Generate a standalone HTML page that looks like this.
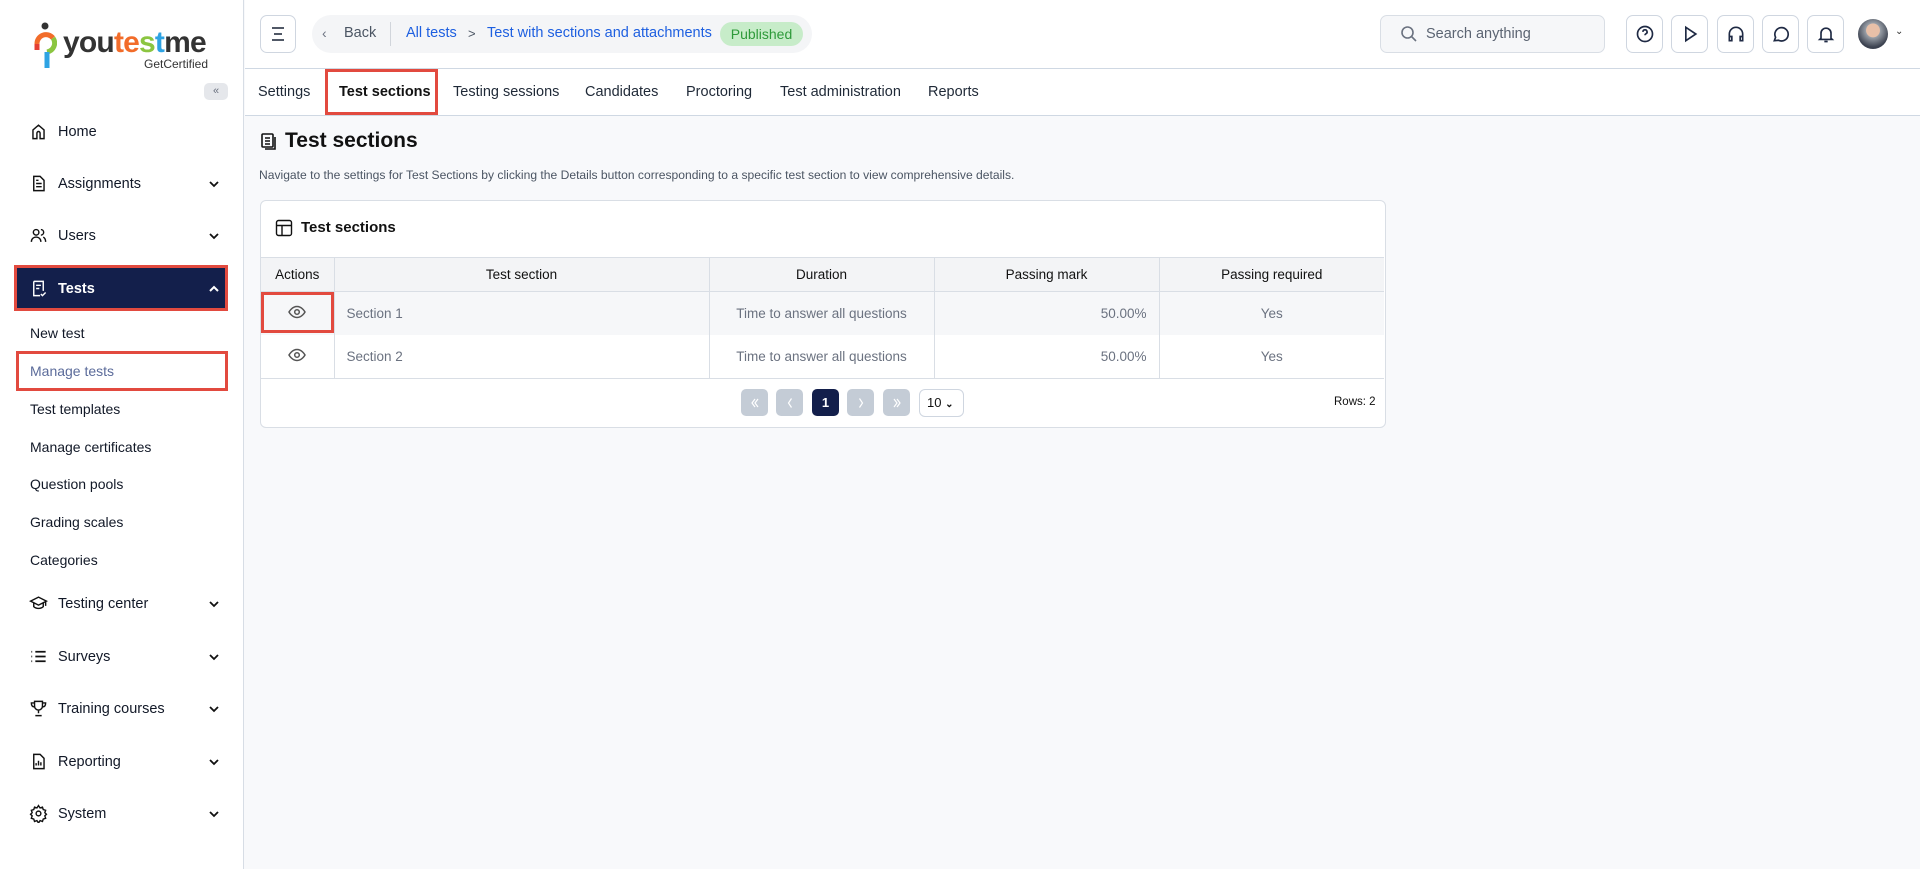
<!DOCTYPE html>
<html><head><meta charset="utf-8"><style>
*{box-sizing:border-box;margin:0;padding:0}
body{width:1920px;height:869px;overflow:hidden;font-family:"Liberation Sans",Arial,sans-serif;background:#f8f9fb;position:relative;color:#111827}
.a{position:absolute}
#sb{left:0;top:0;width:244px;height:869px;background:#fff;border-right:1px solid #d7dde5}
.nav{position:absolute;left:29px;font-size:14.5px;color:#111827;display:flex;align-items:center;width:190px}
.nav svg{width:19px;height:19px;margin-right:10px;flex:none}
.nav .ch{position:absolute;right:-2px;width:14px;height:14px;margin:0}
.sub{position:absolute;left:30px;font-size:14px;color:#111827}
#top{left:245px;top:0;right:0;height:69px;background:#fff;border-bottom:1px solid #cfd8e3}
#tabs{left:245px;top:69px;right:0;height:47px;background:#fff;border-bottom:1px solid #cfd8e3}
.tab{position:absolute;top:84px;font-size:14.5px;color:#1f2937}
.ib{position:absolute;top:15px;width:37px;height:38px;border:1px solid #cfd6e0;border-radius:7px;background:#fff;display:flex;align-items:center;justify-content:center}
.ib svg{width:20px;height:20px}
table{border-collapse:collapse;position:absolute;left:261px;top:257px;width:1123px;font-size:13.5px}
td,th{border-right:1px solid #d9dee5;height:34px;padding:0 12px}
th{background:#f3f4f6;font-weight:normal;color:#111;height:34px;border-top:1px solid #d9dee5;border-bottom:1px solid #d9dee5}
td{color:#6b7280;height:43px}
tr.r1 td{background:#f6f7f9;height:43px}
tr.r2 td{height:44px;border-bottom:1px solid #d9dee5}
td:last-child,th:last-child{border-right:none}
.pb{position:absolute;top:389px;width:27px;height:27px;border-radius:5px;background:#c4ccd6;display:flex;align-items:center;justify-content:center}
.pb svg{width:12px;height:12px}
</style></head><body>
<div id="sb" class="a">
  <svg class="a" style="left:33px;top:22px" width="24" height="48" viewBox="0 0 24 48"><circle cx="12" cy="4" r="3.5" fill="#333"/><path d="M4 22 A9 9 0 0 1 20 16" stroke="#f26c2a" stroke-width="5" fill="none"/><path d="M20 16 A9 9 0 0 1 14 30" stroke="#8bc540" stroke-width="5" fill="none"/><path d="M4 22 L4 28" stroke="#e43f33" stroke-width="5"/><path d="M14 30 L14 46" stroke="#2ea3e3" stroke-width="5"/></svg>
  <div class="a" style="left:63px;top:26px;font-size:30px;font-weight:bold;letter-spacing:-0.8px;color:#333">you<span style="color:#f26c2a">te</span><span style="color:#8bc540">s</span><span style="color:#2ea3e3">t</span>me</div>
  <div class="a" style="left:144px;top:57px;font-size:12px;color:#333">GetCertified</div>
  <div class="a" style="left:204px;top:83px;width:24px;height:17px;background:#e5e7eb;border-radius:5px;font-size:11px;color:#6b7280;text-align:center;line-height:17px">«</div>

  <div class="nav" style="top:122px"><svg viewBox="0 0 24 24" fill="none" stroke="#111" stroke-width="1.8"><path d="M5 21V10l7-6 7 6v11h-5v-7a2 2 0 0 0-4 0v7z"/></svg>Home</div>
  <div class="nav" style="top:174px"><svg viewBox="0 0 24 24" fill="none" stroke="#111" stroke-width="1.8"><path d="M6 3h8l5 5v13H6z M9 12h7M9 16h7M9 8h3"/></svg>Assignments<svg class="ch" viewBox="0 0 14 14" fill="none" stroke="#111" stroke-width="1.8"><path d="M3 5l4 4 4-4"/></svg></div>
  <div class="nav" style="top:226px"><svg viewBox="0 0 24 24" fill="none" stroke="#111" stroke-width="1.8"><circle cx="9" cy="8" r="3.5"/><path d="M3 20c0-4 3-6 6-6s6 2 6 6M15 4.5a3.5 3.5 0 0 1 0 7M18 14c2 1 3 3 3 6"/></svg>Users<svg class="ch" viewBox="0 0 14 14" fill="none" stroke="#111" stroke-width="1.8"><path d="M3 5l4 4 4-4"/></svg></div>

  <div class="a" style="left:14px;top:265px;width:214px;height:46px;background:#131f4b;border:3px solid #e24a3f"></div>
  <div class="nav" style="top:279px;color:#fff;font-weight:bold"><svg viewBox="0 0 24 24" fill="none" stroke="#fff" stroke-width="1.8"><path d="M6 3h12v12M6 3v18h8M9 8h6M9 12h4M15 19l2 2 4-4"/></svg>Tests<svg class="ch" viewBox="0 0 14 14" fill="none" stroke="#fff" stroke-width="2"><path d="M3 9l4-4 4 4"/></svg></div>

  <div class="sub" style="top:325px">New test</div>
  <div class="a" style="left:16px;top:351px;width:212px;height:40px;border:3px solid #e24a3f"></div>
  <div class="sub" style="top:363px;color:#5b6b9a">Manage tests</div>
  <div class="sub" style="top:401px">Test templates</div>
  <div class="sub" style="top:439px">Manage certificates</div>
  <div class="sub" style="top:476px">Question pools</div>
  <div class="sub" style="top:514px">Grading scales</div>
  <div class="sub" style="top:552px">Categories</div>

  <div class="nav" style="top:594px"><svg viewBox="0 0 24 24" fill="none" stroke="#111" stroke-width="1.8"><path d="M2 9l10-5 10 5-10 5z M6 11v5c3 3 9 3 12 0v-5M21 9v6"/></svg>Testing center<svg class="ch" viewBox="0 0 14 14" fill="none" stroke="#111" stroke-width="1.8"><path d="M3 5l4 4 4-4"/></svg></div>
  <div class="nav" style="top:647px"><svg viewBox="0 0 24 24" fill="none" stroke="#111" stroke-width="2.2"><path d="M8 6h13M8 12h13M8 18h13M3 6h1M3 12h1M3 18h1"/></svg>Surveys<svg class="ch" viewBox="0 0 14 14" fill="none" stroke="#111" stroke-width="1.8"><path d="M3 5l4 4 4-4"/></svg></div>
  <div class="nav" style="top:699px"><svg viewBox="0 0 24 24" fill="none" stroke="#111" stroke-width="1.8"><path d="M7 3h10v6a5 5 0 0 1-10 0z M7 5H3c0 4 2 5 4 5M17 5h4c0 4-2 5-4 5M12 14v4M8 21h8"/></svg>Training courses<svg class="ch" viewBox="0 0 14 14" fill="none" stroke="#111" stroke-width="1.8"><path d="M3 5l4 4 4-4"/></svg></div>
  <div class="nav" style="top:752px"><svg viewBox="0 0 24 24" fill="none" stroke="#111" stroke-width="1.8"><path d="M6 3h8l5 5v13H6z M9 17v-3M12 17v-6M15 17v-4"/></svg>Reporting<svg class="ch" viewBox="0 0 14 14" fill="none" stroke="#111" stroke-width="1.8"><path d="M3 5l4 4 4-4"/></svg></div>
  <div class="nav" style="top:804px"><svg viewBox="0 0 24 24" fill="none" stroke="#111" stroke-width="1.8"><circle cx="12" cy="12" r="3"/><path d="M12 2l2 3 3-1 1 3 3 1-1 3 2 2-2 2 1 3-3 1-1 3-3-1-2 3-2-3-3 1-1-3-3-1 1-3-2-2 2-2-1-3 3-1 1-3 3 1z"/></svg>System<svg class="ch" viewBox="0 0 14 14" fill="none" stroke="#111" stroke-width="1.8"><path d="M3 5l4 4 4-4"/></svg></div>
</div>

<div id="top" class="a"></div>
<div class="a" style="left:260px;top:15px;width:36px;height:38px;border:1px solid #cfd6e0;border-radius:7px;background:#fff"><svg width="34" height="36" viewBox="0 0 34 36" fill="none" stroke="#374151" stroke-width="1.8"><path d="M11 12h12M13 18h8M11 24h12"/></svg></div>
<div class="a" style="left:312px;top:15px;width:500px;height:38px;border-radius:19px;background:#f4f5f7"></div>
<div class="a" style="left:322px;top:25px;font-size:14px;color:#6b7280">‹</div>
<div class="a" style="left:344px;top:25px;font-size:14.5px;color:#4b5563">Back</div>
<div class="a" style="left:390px;top:22px;width:1px;height:24px;background:#d1d5db"></div>
<div class="a" style="left:406px;top:25px;font-size:14.5px;color:#1d5fe0">All tests</div>
<div class="a" style="left:468px;top:26px;font-size:13px;color:#4b5563">&gt;</div>
<div class="a" style="left:487px;top:25px;font-size:14.5px;color:#1d5fe0">Test with sections and attachments</div>
<div class="a" style="left:720px;top:22px;width:83px;height:24px;border-radius:12px;background:#c7ecc9;color:#2e9a3a;font-size:14px;text-align:center;line-height:24px">Published</div>

<div class="a" style="left:1380px;top:15px;width:225px;height:38px;border:1px solid #d9dee5;border-radius:7px;background:#f6f7f9"></div>
<svg class="a" style="left:1400px;top:25px" width="18" height="18" viewBox="0 0 18 18" fill="none" stroke="#6b7280" stroke-width="1.6"><circle cx="7.5" cy="7.5" r="5.5"/><path d="M11.5 11.5l4.5 4.5"/></svg>
<div class="a" style="left:1426px;top:26px;font-size:14.5px;color:#5b6472">Search anything</div>

<div class="ib" style="left:1626px"><svg viewBox="0 0 24 24" fill="none" stroke="#1f2a44" stroke-width="2"><circle cx="12" cy="12" r="9"/><path d="M9.5 9.5a2.5 2.5 0 1 1 3.5 2.3c-.7.4-1 .9-1 1.7M12 17h.01"/></svg></div>
<div class="ib" style="left:1671px"><svg viewBox="0 0 24 24" fill="none" stroke="#1f2a44" stroke-width="2"><path d="M7 4l12 8-12 8z"/></svg></div>
<div class="ib" style="left:1717px"><svg viewBox="0 0 24 24" fill="none" stroke="#1f2a44" stroke-width="2"><path d="M4 17v-5a8 8 0 0 1 16 0v5M4 15h3v5H4zM17 15h3v5h-3z"/></svg></div>
<div class="ib" style="left:1762px"><svg viewBox="0 0 24 24" fill="none" stroke="#1f2a44" stroke-width="2"><path d="M4 20l1.5-4A8 8 0 1 1 9 19.5z"/></svg></div>
<div class="ib" style="left:1807px"><svg viewBox="0 0 24 24" fill="none" stroke="#1f2a44" stroke-width="2"><path d="M6 17V11a6 6 0 0 1 12 0v6l1.5 1.5h-15zM10 21h4"/></svg></div>
<div class="a" style="left:1858px;top:19px;width:30px;height:30px;border-radius:50%;background:radial-gradient(circle at 50% 38%,#e8c0a8 0 28%,#9aa0a8 30%,#3c4250 70%)"></div>
<div class="a" style="left:1895px;top:26px;font-size:10px;color:#333">⌄</div>

<div id="tabs" class="a"></div>
<div class="tab" style="left:258px">Settings</div>
<div class="a" style="left:325px;top:69px;width:113px;height:46px;border:3px solid #e24a3f"></div>
<div class="tab" style="left:339px;font-weight:bold;color:#111">Test sections</div>
<div class="tab" style="left:453px">Testing sessions</div>
<div class="tab" style="left:585px">Candidates</div>
<div class="tab" style="left:686px">Proctoring</div>
<div class="tab" style="left:780px">Test administration</div>
<div class="tab" style="left:928px">Reports</div>

<svg class="a" style="left:260px;top:132px" width="18" height="20" viewBox="0 0 18 20" fill="none" stroke="#111" stroke-width="1.6"><rect x="2" y="2" width="11" height="13" rx="1"/><path d="M5 6h5M5 9h5M5 12h5M15 5v12H5"/></svg>
<div class="a" style="left:285px;top:129px;font-size:21px;font-weight:bold;color:#111">Test sections</div>
<div class="a" style="left:259px;top:168px;font-size:12.1px;color:#4b5563">Navigate to the settings for Test Sections by clicking the Details button corresponding to a specific test section to view comprehensive details.</div>

<div class="a" style="left:260px;top:200px;width:1126px;height:228px;background:#fff;border:1px solid #d9dee5;border-radius:6px"></div>
<svg class="a" style="left:275px;top:219px" width="18" height="18" viewBox="0 0 18 18" fill="none" stroke="#111" stroke-width="1.4"><rect x="1.5" y="1.5" width="15" height="15" rx="2"/><path d="M1.5 6.5h15M7 6.5v10"/></svg>
<div class="a" style="left:301px;top:219px;font-size:15px;font-weight:bold;color:#111">Test sections</div>

<table>
<tr><th style="width:73px">Actions</th><th style="width:375px">Test section</th><th style="width:225px">Duration</th><th style="width:225px">Passing mark</th><th>Passing required</th></tr>
<tr class="r1"><td style="text-align:center"><svg width="18" height="14" viewBox="0 0 18 14" fill="none" stroke="#555" stroke-width="1.5"><path d="M1 7s3-5.5 8-5.5S17 7 17 7s-3 5.5-8 5.5S1 7 1 7z"/><circle cx="9" cy="7" r="2.3"/></svg></td><td>Section 1</td><td style="text-align:center">Time to answer all questions</td><td style="text-align:right">50.00%</td><td style="text-align:center">Yes</td></tr>
<tr class="r2"><td style="text-align:center"><svg width="18" height="14" viewBox="0 0 18 14" fill="none" stroke="#555" stroke-width="1.5"><path d="M1 7s3-5.5 8-5.5S17 7 17 7s-3 5.5-8 5.5S1 7 1 7z"/><circle cx="9" cy="7" r="2.3"/></svg></td><td>Section 2</td><td style="text-align:center">Time to answer all questions</td><td style="text-align:right">50.00%</td><td style="text-align:center">Yes</td></tr>
</table>
<div class="a" style="left:261px;top:292px;width:73px;height:41px;border:3px solid #e24a3f"></div>

<div class="pb" style="left:741px"><svg viewBox="0 0 12 12" fill="none" stroke="#fff" stroke-width="1.2"><path d="M6 2L3 6l3 4M9 2L6 6l3 4"/></svg></div>
<div class="pb" style="left:776px"><svg viewBox="0 0 12 12" fill="none" stroke="#fff" stroke-width="1.2"><path d="M7.5 1.5L4.5 6l3 4.5"/></svg></div>
<div class="pb" style="left:812px;background:#131f4b;color:#fff;font-weight:bold;font-size:13px">1</div>
<div class="pb" style="left:847px"><svg viewBox="0 0 12 12" fill="none" stroke="#fff" stroke-width="1.2"><path d="M4.5 1.5L7.5 6l-3 4.5"/></svg></div>
<div class="pb" style="left:883px"><svg viewBox="0 0 12 12" fill="none" stroke="#fff" stroke-width="1.2"><path d="M3 2l3 4-3 4M6 2l3 4-3 4"/></svg></div>
<div class="a" style="left:919px;top:389px;width:45px;height:28px;border:1px solid #cfd6e0;border-radius:6px;background:#fff;font-size:13px;line-height:26px;padding-left:7px;color:#111">10 <b style="font-size:10px">⌄</b></div>
<div class="a" style="left:1334px;top:396px;font-size:11.5px;color:#111">Rows: 2</div>
</body></html>
